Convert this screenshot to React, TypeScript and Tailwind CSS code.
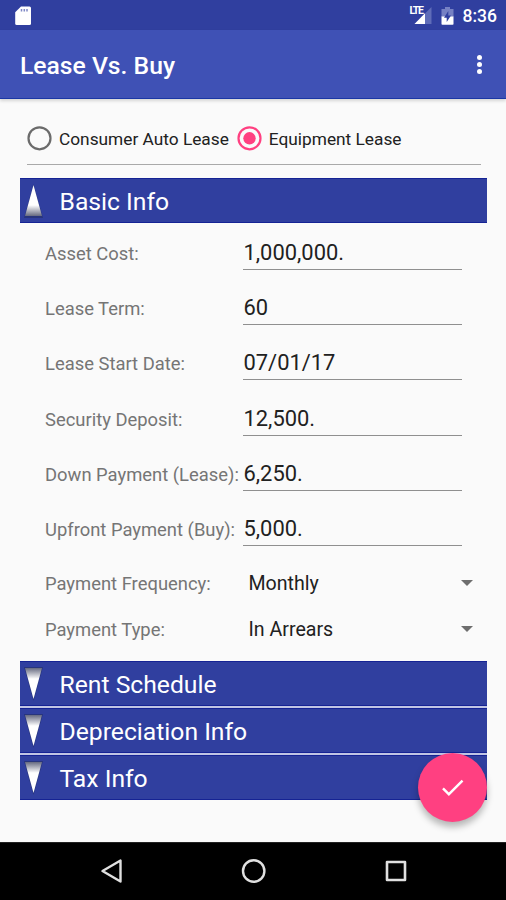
import { useState } from 'react';

interface Field {
  label: string;
  value: string;
}

const FIELDS: Field[] = [
  { label: 'Asset Cost:', value: '1,000,000.' },
  { label: 'Lease Term:', value: '60' },
  { label: 'Lease Start Date:', value: '07/01/17' },
  { label: 'Security Deposit:', value: '12,500.' },
  { label: 'Down Payment (Lease):', value: '6,250.' },
  { label: 'Upfront Payment (Buy):', value: '5,000.' },
];

const SELECTS: Field[] = [
  { label: 'Payment Frequency:', value: 'Monthly' },
  { label: 'Payment Type:', value: 'In Arrears' },
];

const SECTIONS = ['Rent Schedule', 'Depreciation Info', 'Tax Info'];

export default function App() {
  const [leaseType, setLeaseType] = useState('equipment');

  return (
    <div className="w-[506px] h-[900px] flex flex-col overflow-hidden bg-[#fafafa] font-[Roboto,sans-serif]">
      <StatusBar />
      <header className="h-[69px] shrink-0 bg-[#3f51b5] border-b border-[#1a37a5] flex items-center justify-between pl-5 pr-[24px] shadow-[0_2px_3px_rgba(0,0,0,0.15)]">
        <h1 className="text-white text-[24.7px] font-medium leading-none pt-1">Lease Vs. Buy</h1>
        <button aria-label="More options" className="flex flex-col gap-[2.3px] pt-px">
          <span className="w-[5px] h-[5px] rounded-full bg-white" />
          <span className="w-[5px] h-[5px] rounded-full bg-white" />
          <span className="w-[5px] h-[5px] rounded-full bg-white" />
        </button>
      </header>

      <main className="flex-1 min-h-0 relative">
        <div className="h-[66px] ml-[27px] mr-[25px] pt-[26px] border-b border-[#a9a9a9] flex items-start">
          <Radio
            label="Consumer Auto Lease"
            checked={leaseType === 'consumer'}
            onSelect={() => setLeaseType('consumer')}
          />
          <Radio
            label="Equipment Lease"
            checked={leaseType === 'equipment'}
            onSelect={() => setLeaseType('equipment')}
          />
        </div>

        <div className="ml-5 mr-[19px] mt-[13px]">
          <SectionHeader title="Basic Info" open />
        </div>

        <div className="pl-[45px] pt-[7px]">
          {FIELDS.map((field) => (
            <div key={field.label} className="h-[55.2px] flex">
              <div className="w-[198px] shrink-0 whitespace-nowrap text-[#757575] text-[18.4px] leading-6 pt-[12px]">
                {field.label}
              </div>
              <div className="w-[219px] h-10 border-b border-[#8f8f8f] text-[#212121] text-[21.9px] leading-7 pt-[9px] pl-[0.5px]">
                {field.value}
              </div>
            </div>
          ))}
          {SELECTS.map((field) => (
            <div key={field.label} className="h-[46px] flex items-center">
              <div className="w-[203.500px] shrink-0 whitespace-nowrap text-[#757575] text-[18.4px] leading-6">
                {field.label}
              </div>
              <div className="w-[224.500px] flex items-center justify-between text-[#212121] text-[19.6px] leading-6">
                {field.value}
                <svg width="12" height="6" viewBox="0 0 12 6" className="-mt-[3px]">
                  <path d="M0 0h12L6 6z" fill="#6e6e6e" />
                </svg>
              </div>
            </div>
          ))}
        </div>

        <div className="ml-5 mr-[19px] mt-[8px] flex flex-col gap-[2px] bg-[#c0c4e4]">
          {SECTIONS.map((title) => (
            <SectionHeader key={title} title={title} />
          ))}
        </div>

        <button
          aria-label="Calculate"
          className="absolute right-[19px] bottom-[20px] w-[69px] h-[69px] rounded-full bg-[#ff4081] flex items-center justify-center shadow-[0_5px_7px_rgba(0,0,0,0.28)]"
        >
          <svg width="29" height="29" viewBox="0 0 24 24" fill="#fff">
            <path d="M9 16.17 4.83 12l-1.42 1.41L9 19 21 7l-1.41-1.41z" />
          </svg>
        </button>
      </main>

      <NavBar />
    </div>
  );
}

function StatusBar() {
  return (
    <div className="h-[30px] shrink-0 bg-[#303f9f] flex items-center justify-between pl-[15px] pr-[9px]">
      <svg width="17" height="20" viewBox="0 0 17 20" className="mt-[1px]">
        <path d="M6 .5h8.500q1.500 0 1.500 1.500v15.500q0 1.500-1.500 1.500H1.700Q.2 19 .2 17.500V6.300z" fill="#fff" />
        <path d="M6.500 3v2.500M9.300 3v2.500M12 3v2.500" stroke="#7f88c5" strokeWidth="1.500" />
      </svg>
      <div className="flex items-center">
        <div className="relative w-[23px] h-[20px]">
          <svg width="23" height="20" viewBox="0 0 23 20">
            <path d="M22.500 2v17H5.500z" fill="#5f6cb8" />
            <path d="M16 8.300V19H5.500z" fill="#fff" />
          </svg>
          <span className="absolute left-[1px] top-[1px] text-white text-[10.500px] font-bold leading-[10px] tracking-[-1.300px]">LTE</span>
        </div>
        <svg width="13" height="20" viewBox="0 0 13 20" className="ml-[9px] mt-px">
          <path d="M4 1h5v2h3.500v8H.5V3H4z" fill="#7681c4" />
          <path d="M.5 10.500h12V18q0 .8-.8.8H1.300q-.8 0-.8-.8z" fill="#fff" />
          <path d="M7.300 5 3 11.700h2.700V16L10 9.500H7.300z" fill="#303f9f" />
        </svg>
        <span className="ml-[9px] pt-[4px] text-white text-[17.500px] font-medium leading-none">8:36</span>
      </div>
    </div>
  );
}

interface RadioProps {
  label: string;
  checked: boolean;
  onSelect: () => void;
}

function Radio({ label, checked, onSelect }: RadioProps) {
  return (
    <button
      role="radio"
      aria-checked={checked}
      onClick={onSelect}
      className="flex items-center gap-[7px] mr-[8px] h-[26px] whitespace-nowrap text-[#212121] text-[17.300px]"
    >
      <svg width="25" height="25" viewBox="0 0 25 25" className={checked ? 'text-[#ff4081]' : 'text-[#6b6b6b]'}>
        <circle cx="12.5" cy="12.3" r="11" fill="none" stroke="currentColor" strokeWidth="2.2" />
        {checked && <circle cx="12.5" cy="12.3" r="6.2" fill="currentColor" />}
      </svg>
      <span className="pt-[3px]">{label}</span>
    </button>
  );
}

interface SectionHeaderProps {
  title: string;
  open?: boolean;
}

function SectionHeader({ title, open = false }: SectionHeaderProps) {
  const gradientId = open ? 'arrow-up' : 'arrow-down';

  return (
    <div className="h-[45px] bg-[#303f9f] border-y border-[#152394] flex items-center pl-[4px]">
      <svg width="19" height="34" viewBox="0 0 19 34">
        <defs>
          <linearGradient id={gradientId} x1="0" y1={open ? '1' : '0'} x2="0" y2={open ? '0' : '1'}>
            <stop offset="0" stopColor="#666a80" />
            <stop offset="0.35" stopColor="#fff" />
            <stop offset="1" stopColor="#fff" />
          </linearGradient>
        </defs>
        <path
          d={open ? 'M9.5 0 19 34H0z' : 'M9.5 34 19 0H0z'}
          fill="#28357c"
        />
        <path
          d={open ? 'M9.5 1 18 32H1z' : 'M9.5 32 18 1H1z'}
          fill={`url(#${gradientId})`}
        />
      </svg>
      <span className="ml-[16.500px] text-white text-[24.7px] leading-none pt-[4px]">{title}</span>
    </div>
  );
}

function NavBar() {
  return (
    <nav className="h-[58px] shrink-0 bg-black border-t border-[#222] flex items-center justify-between pl-[100px] pr-[98px] pb-[2px]">
      <svg width="24" height="26" viewBox="0 0 24 26" fill="none" stroke="#e0e0e0" strokeWidth="2.4" strokeLinejoin="round">
        <path d="M2.500 13 20.500 2.500v21z" />
      </svg>
      <svg width="26" height="26" viewBox="0 0 26 26" fill="none" stroke="#e0e0e0" strokeWidth="2.4">
        <circle cx="12.700" cy="13" r="10.700" />
      </svg>
      <svg width="24" height="24" viewBox="0 0 24 24" fill="none" stroke="#e0e0e0" strokeWidth="2.600" strokeLinejoin="round">
        <path d="M3 3h18v18H3z" />
      </svg>
    </nav>
  );
}
